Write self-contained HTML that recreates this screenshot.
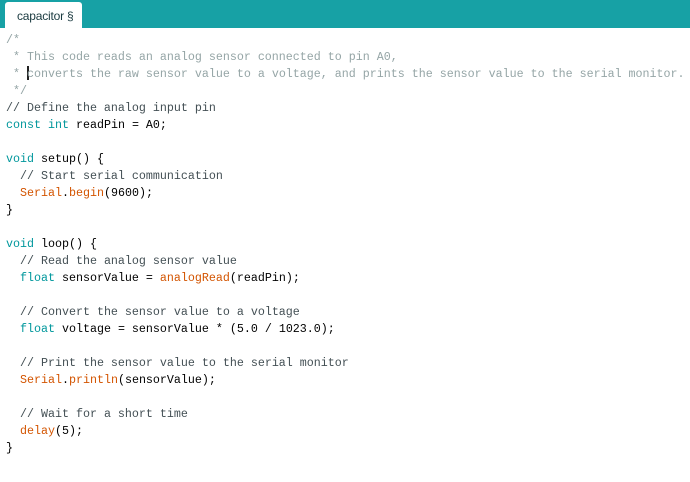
<!DOCTYPE html>
<html><head><style>
body{margin:0;width:690px;height:482px;background:#fff;overflow:hidden;position:relative}
.bar{position:absolute;left:0;top:0;width:690px;height:28px;background:#17a1a5}
.tab{position:absolute;left:5px;top:2px;width:77px;height:26px;background:#fff;border-radius:3px 3px 0 0;font:12px "Liberation Sans",sans-serif;color:#1a3a40}
.tab span{position:absolute;left:12px;top:7px;letter-spacing:-0.2px}
pre{position:absolute;left:6px;top:32px;margin:0;font:11.67px/17px "Liberation Mono",monospace;color:#000}
.c{color:#95a5a6}.l{color:#434f54}.k{color:#00979c}.o{color:#d35400}
.cur{display:inline-block;width:2px;height:14px;background:#222;vertical-align:-3px;margin-right:-2px}
</style></head><body>
<div class="bar"></div><div class="tab"><span>capacitor §</span></div>
<pre><span class="c">/*
 * This code reads an analog sensor connected to pin A0,
 * <span class="cur"></span>converts the raw sensor value to a voltage, and prints the sensor value to the serial monitor.
 */</span>
<span class="l">// Define the analog input pin</span>
<span class="k">const</span> <span class="k">int</span> readPin = A0;

<span class="k">void</span> setup() {
  <span class="l">// Start serial communication</span>
  <span class="o">Serial</span>.<span class="o">begin</span>(9600);
}

<span class="k">void</span> loop() {
  <span class="l">// Read the analog sensor value</span>
  <span class="k">float</span> sensorValue = <span class="o">analogRead</span>(readPin);

  <span class="l">// Convert the sensor value to a voltage</span>
  <span class="k">float</span> voltage = sensorValue * (5.0 / 1023.0);

  <span class="l">// Print the sensor value to the serial monitor</span>
  <span class="o">Serial</span>.<span class="o">println</span>(sensorValue);

  <span class="l">// Wait for a short time</span>
  <span class="o">delay</span>(5);
}</pre>
</body></html>
